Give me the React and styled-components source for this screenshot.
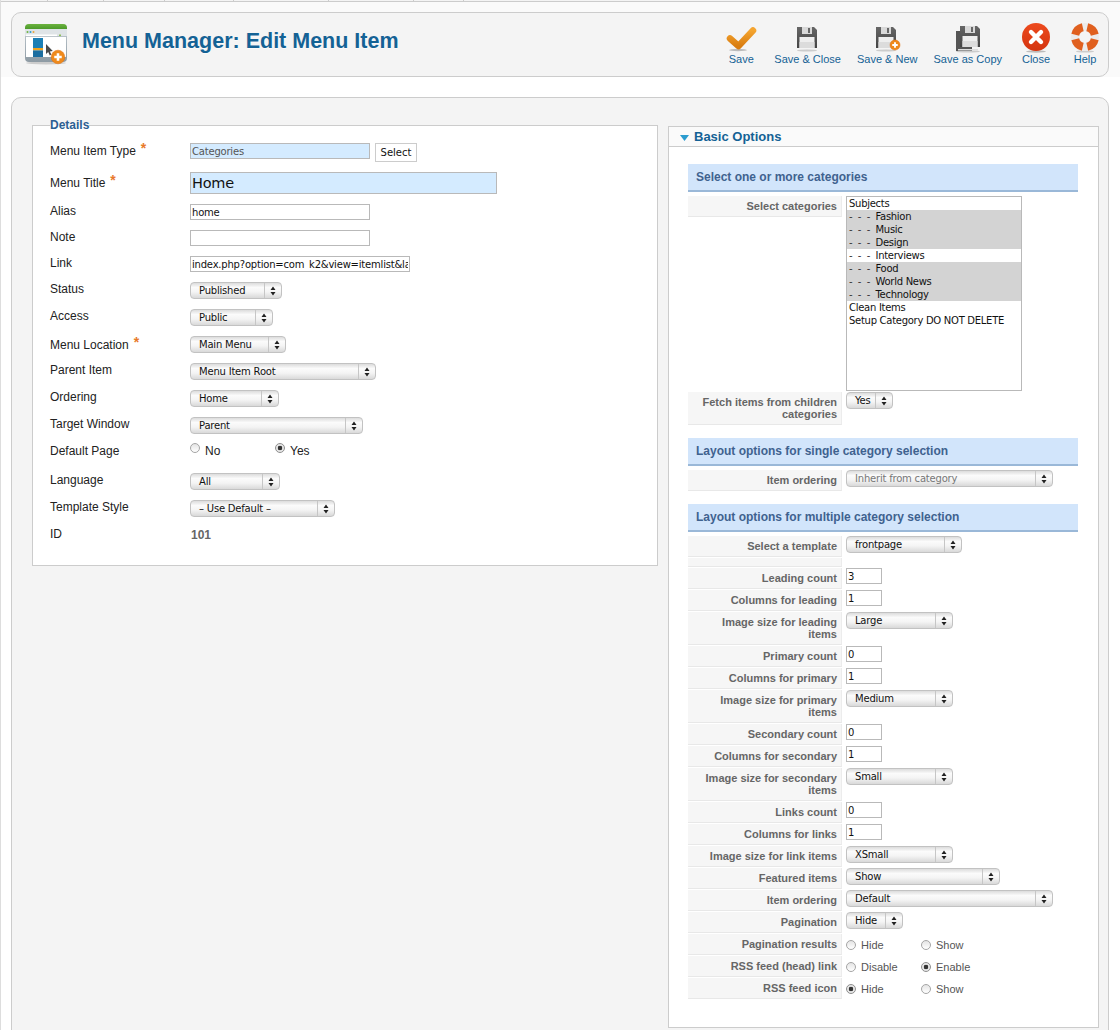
import React from "react";
import styled, { createGlobalStyle } from "styled-components";

const UI = `"DejaVu Sans", "Liberation Sans", sans-serif`;
const SANS = `"Liberation Sans", Arial, sans-serif`;

const Global = createGlobalStyle`
  html, body { margin: 0; padding: 0; height: 1030px; overflow: hidden; background: #fff; }
  #root { height: 1030px; overflow: hidden; }
  * { box-sizing: border-box; }
`;

const Page = styled.div`
  font-family: ${SANS};
  border-left: 1px solid #ddd;
  min-height: 1030px;
  height: 1030px;
  overflow: hidden;
`;
const TopMenu = styled.div`
  display: flex;
  height: 2px;
  border-bottom: 1px solid #ccc;
  background: #f4f4f4;
`;
const TopCell = styled.div`
  width: ${(p) => p.$w}px;
  border-right: 1px solid #ccc;
`;
const HeaderBand = styled.div`
  background: #fafafa;
  padding: 10px 11px 0 10px;
  height: 75px;
`;
const Toolbar = styled.header`
  display: flex;
  align-items: flex-start;
  height: 65px;
  border: 1px solid #ccc;
  border-radius: 10px;
  background: #f4f4f4;
  padding: 10px 6px 0 12px;
`;
const PageIcon = styled.svg`
  width: 46px;
  height: 44px;
  flex: none;
`;
const Title = styled.h1`
  margin: 4px 0 0 12px;
  font: bold 21.5px/28px ${SANS};
  color: #146295;
  text-shadow: 0 1px 0 rgba(255, 255, 255, 0.6);
`;
const Tools = styled.div`
  margin-left: auto;
  display: flex;
  gap: 16px;
`;
const ToolButton = styled.a`
  display: flex;
  flex-direction: column;
  align-items: center;
  min-width: 34px;
  color: #146295;
  font: 11px/13px ${SANS};
  white-space: nowrap;
  &:nth-child(5) {
    margin-left: 1px;
  }
  &:last-child {
    margin-left: -1px;
  }
`;
const ToolIcon = styled.svg`
  width: 34px;
  height: 30px;
  flex: none;
`;
const MainPanel = styled.main`
  margin: 20px 11px 0 10px;
  height: 1000px;
  border: 1px solid #ccc;
  border-radius: 10px 10px 0 0;
  background: #f4f4f4;
  padding: 20px 9px 0 20px;
  display: flex;
  align-items: flex-start;
  gap: 10px;
`;
const Details = styled.fieldset`
  width: 626px;
  flex: none;
  margin: 0;
  padding: 11px 17px 0;
  height: 448px;
  border: 1px solid #ccc;
  background: #fff;
  min-inline-size: 0;
`;
const Legend = styled.legend`
  padding: 0;
  font: bold 12px/14px ${SANS};
  color: #2c5f93;
`;
const FormRow = styled.div`
  display: flex;
  align-items: flex-start;
  height: ${(p) => p.$h}px;
`;
const FormLabel = styled.label`
  width: 140px;
  flex: none;
  padding-top: ${(p) => p.$nudge || 0}px;
  font: 12px/14px ${SANS};
  color: #222;
`;
const Star = styled.span`
  color: #e8792b;
  margin-left: 5px;
  font-size: 14px;
  font-weight: bold;
  line-height: 0;
  position: relative;
  top: -2px;
`;
const TextInput = styled.input`
  display: block;
  width: ${(p) => p.$w}px;
  height: ${(p) => p.$height || 16}px;
  padding: 0 1px;
  border: 1px solid #b9b9b9;
  border-radius: 0;
  outline: none;
  background: ${(p) => (p.$tint ? "#d4ebff" : "#fff")};
  color: ${(p) => p.$color || "#111"};
  font: ${(p) => p.$size || 10}px/1 ${UI};
  letter-spacing: -0.2px;
`;
const SmallButton = styled.button`
  margin-left: 5px;
  width: 42px;
  height: 19px;
  padding: 0;
  border: 1px solid #ccc;
  background: #fff;
  color: #111;
  font: 10px/1 ${UI};
`;
const PickerBox = styled.div`
  display: flex;
  width: ${(p) => p.$w}px;
  height: 17px;
  flex: none;
  border: 1px solid #c2c2c2;
  border-radius: 4px;
  background: linear-gradient(#dcdcdc, #fbfbfb 30%, #f4f4f4 60%, #d9d9d9);
  color: ${(p) => (p.$off ? "#777" : "#111")};
  font: 10px/15px ${UI};
  letter-spacing: -0.2px;
`;
const PickerValue = styled.span`
  flex: 1;
  min-width: 0;
  padding-left: 8px;
  white-space: nowrap;
  overflow: hidden;
`;
const PickerArrow = styled.span`
  width: 17px;
  flex: none;
  display: flex;
  align-items: center;
  justify-content: center;
  border-left: 1px solid #c6c6c6;
`;
const RadioSet = styled.div`
  display: flex;
  padding-top: ${(p) => p.$top || 0}px;
`;
const RadioOption = styled.label`
  display: flex;
  align-items: center;
  width: ${(p) => p.$w}px;
  gap: 5px;
  font: ${(p) => p.$size}px/14px ${SANS};
  color: ${(p) => p.$color};
`;
const RadioDot = styled.input.attrs({ type: "radio", readOnly: true })`
  appearance: none;
  width: 10px;
  height: 10px;
  margin: 0;
  flex: none;
  border-radius: 50%;
  border: 1px solid #a5a5a5;
  background: linear-gradient(#e4e4e4, #fff);
  position: relative;
  top: ${(p) => p.$lift || 0}px;
  &:checked {
    background: radial-gradient(circle, #333 0 2px, #e6e6e6 2.6px);
    border-color: #8f8f8f;
  }
`;
const IdText = styled.span`
  padding-left: 1px;
  font: bold 12px/16px ${SANS};
  color: #666;
`;
const OptionsPanel = styled.section`
  width: 431px;
  flex: none;
  height: 902px;
  margin-top: 8px;
  border: 1px solid #ccc;
  background: #fff;
`;
const PanelHead = styled.h3`
  display: flex;
  align-items: center;
  gap: 5px;
  margin: 0;
  height: 20px;
  padding-left: 11px;
  border-bottom: 1px solid #ccc;
  background: #fafafa;
  font: bold 13px/18px ${SANS};
  color: #146295;
`;
const PanelBody = styled.div`
  padding: 17px 19px 0;
`;
const SectionHead = styled.h4`
  margin: 0 0 4px;
  width: 390px;
  height: 28px;
  padding-left: 8px;
  border-bottom: 2px solid #9ab8d8;
  background: #d2e5fb;
  font: bold 12px/27px ${SANS};
  color: #3f628f;
`;
const Section = styled.div`
  margin-bottom: 13px;
`;
const OptionRow = styled.div`
  display: flex;
  align-items: flex-start;
  gap: 4px;
  margin-bottom: 1px;
`;
const OptionLabel = styled.div`
  width: 154px;
  flex: none;
  padding: 4px 4px 4px 8px;
  background: #f6f6f6;
  border-bottom: 1px solid #e8e8e8;
  border-right: 1px solid #ececec;
  text-align: right;
  font: bold 11px/12px ${SANS};
  color: #666;
`;
const Spacer = styled.div`
  width: 154px;
  height: 9px;
  margin-bottom: 1px;
  background: #f6f6f6;
  border-bottom: 1px solid #e8e8e8;
  border-right: 1px solid #ececec;
`;
const ListBox = styled.div`
  width: 176px;
  height: 195px;
  border: 1px solid #b9b9b9;
  background: #fff;
  font: 10px/13px ${UI};
  letter-spacing: -0.28px;
  color: #111;
`;
const ListOption = styled.div`
  height: 13px;
  padding-left: 2px;
  white-space: nowrap;
  background: ${(p) => (p.$on ? "#d3d3d3" : "transparent")};
`;
const Dashes = styled.span`
  word-spacing: 2.6px;
  white-space: pre;
  color: #333;
`;

const Arrows = () => (
  <svg width="6" height="10" viewBox="0 0 6 10">
    <path d="M3 0.5 5.5 4H.5zM3 9.5.5 6h5z" fill="#222" />
  </svg>
);
const Picker = ({ w, off, children }) => (
  <PickerBox $w={w} $off={off}>
    <PickerValue>{children}</PickerValue>
    <PickerArrow><Arrows /></PickerArrow>
  </PickerBox>
);

const Defs = ({ id, from, to }) => (
  <defs>
    <linearGradient id={id} x1="0" y1="0" x2="0" y2="1">
      <stop offset="0" stopColor={from} />
      <stop offset="1" stopColor={to} />
    </linearGradient>
  </defs>
);
const Plus = ({ cx, cy, r }) => (
  <g>
    <circle cx={cx} cy={cy} r={r} fill="#ef8a1c" stroke="#dc6f10" strokeWidth=".5" />
    <path d={`M${cx - r * 0.55} ${cy}h${r * 1.1}M${cx} ${cy - r * 0.55}v${r * 1.1}`} stroke="#fff" strokeWidth={r * 0.38} />
  </g>
);
const Floppy = ({ x = 6, y = 3, id }) => (
  <g>
    <path d={`M${x} ${y}h17l3 3v18h-20z`} fill={`url(#${id})`} />
    <rect x={x + 5} y={y} width="10" height="7" fill="#d8d8d8" />
    <rect x={x + 11} y={y + 1} width="2" height="5" fill="#666" />
    <rect x={x + 2.5} y={y + 10} width="15" height="11" fill="#eee" />
    <rect x={x + 2.5} y={y + 15} width="15" height="6" fill="#dcdcdc" />
  </g>
);

const CheckIcon = () => (
  <ToolIcon viewBox="0 -1 34 30">
    <Defs id="chk" from="#f4a42f" to="#d97d10" />
    <ellipse cx="14" cy="26" rx="9" ry="1.2" fill="#bbb" />
    <path d="M6 14.5 14.5 22 29 6.5" fill="none" stroke="url(#chk)" strokeWidth="6.5" strokeLinecap="round" strokeLinejoin="round" />
  </ToolIcon>
);
const SaveIcon = ({ id, plus }) => (
  <ToolIcon viewBox="0 -1 34 30">
    <Defs id={id} from="#666" to="#444" />
    <ellipse cx="16" cy="26.5" rx="10" ry="1" fill="#ccc" />
    <Floppy id={id} />
    {plus && <Plus cx={25} cy={21} r={5} />}
  </ToolIcon>
);
const CopyIcon = () => (
  <ToolIcon viewBox="0 -1 34 30">
    <Defs id="cpy" from="#666" to="#444" />
    <ellipse cx="17" cy="27.5" rx="12" ry="1" fill="#ccc" />
    <path d="M5 7h16v20h-16z" fill="#555" />
    <path d="M7 25h20v1.5h-20z" fill="#ddd" />
    <Floppy x={9} y={2} id="cpy" />
  </ToolIcon>
);
const CloseIcon = () => (
  <ToolIcon viewBox="0 -1 34 30">
    <Defs id="cls" from="#ed4a1d" to="#d4340f" />
    <ellipse cx="17" cy="27.5" rx="10" ry="1.2" fill="#bbb" />
    <circle cx="17" cy="13" r="14" fill="url(#cls)" />
    <path d="M12 8l10 10M22 8 12 18" stroke="#fff" strokeWidth="4.4" strokeLinecap="round" />
  </ToolIcon>
);
const HelpIcon = () => (
  <ToolIcon viewBox="0 -1 34 30">
    <ellipse cx="17" cy="27.5" rx="9" ry="1" fill="#ccc" />
    <circle cx="17" cy="13" r="10" fill="none" stroke="#ececec" strokeWidth="8" />
    <g fill="none" stroke="#e0601f" strokeWidth="8">
      {[45, 135, 225, 315].map((a) => (
        <path key={a} d="M11.7 4.52A10 10 0 0 1 22.3 4.52" transform={`rotate(${a} 17 13)`} />
      ))}
    </g>
  </ToolIcon>
);

const MenuGlyph = () => (
  <PageIcon viewBox="0 0 46 44">
    <Defs id="mgr" from="#6cb33f" to="#4c9a2a" />
    <Defs id="mfoot" from="#c9d2d8" to="#8d9aa3" />
    <ellipse cx="22" cy="40" rx="20" ry="1.5" fill="#ccc" />
    <rect x="1" y="1" width="42" height="38" rx="4" fill="url(#mfoot)" />
    <path d="M1 6V5a4 4 0 0 1 4-4h34a4 4 0 0 1 4 4v1z" fill="url(#mgr)" />
    <rect x="1" y="6" width="42" height="7" fill="#dfe4e7" />
    <circle cx="3.5" cy="9" r="1" fill="#6cb33f" />
    <circle cx="6.5" cy="9" r="1" fill="#2d9ed0" />
    <circle cx="9.5" cy="9" r="1" fill="#e8a53a" />
    <rect x="2" y="11.5" width="31" height="1.6" fill="#fff" />
    <rect x="35" y="11.5" width="2" height="1.6" fill="#8fbf5a" />
    <rect x="2" y="14" width="40" height="20" fill="#fff" />
    <rect x="9" y="15" width="10" height="10" fill="#1c7fb5" />
    <rect x="9" y="25" width="10" height="2.4" fill="#f0a41e" />
    <rect x="9" y="27.4" width="10" height="6.6" fill="#1c6ea0" />
    <path d="M22 21v10l2.2-2 1.6 3.4 1.6-.8-1.6-3.2 3-.3z" fill="#4a4a4a" />
    <Plus cx={34} cy={34} r={6.8} />
  </PageIcon>
);
const Caret = () => (
  <svg width="9" height="6" viewBox="0 0 9 6" style={{ marginTop: 3 }}>
    <path d="M0 0h9L4.5 6z" fill="#2b9ccf" />
  </svg>
);

const Radios = ({ items, checked, w, size, color, top, lift }) => (
  <RadioSet $top={top}>
    {items.map((t) => (
      <RadioOption key={t} $w={w} $size={size} $color={color}>
        <RadioDot name={items.join() + top + t} $lift={lift} defaultChecked={t === checked} />
        {t}
      </RadioOption>
    ))}
  </RadioSet>
);

const topCells = [47, 56, 61, 69, 95, 85, 50];
const tools = [
  ["Save", <CheckIcon />],
  ["Save & Close", <SaveIcon id="s1" />],
  ["Save & New", <SaveIcon id="s2" plus />],
  ["Save as Copy", <CopyIcon />],
  ["Close", <CloseIcon />],
  ["Help", <HelpIcon />],
];
const cats = [
  ["Subjects", 0, 0],
  ["Fashion", 1, 1],
  ["Music", 1, 1],
  ["Design", 1, 1],
  ["Interviews", 1, 0],
  ["Food", 1, 1],
  ["World News", 1, 1],
  ["Technology", 1, 1],
  ["Clean Items", 0, 0],
  ["Setup Category DO NOT DELETE", 0, 0],
];
const R = ({ label, children }) => (
  <OptionRow>
    <OptionLabel>{label}</OptionLabel>
    {children}
  </OptionRow>
);
const Num = ({ v }) => <TextInput $w={36} readOnly value={v} />;
const radioProps = { w: 75, size: 11, color: "#555", top: 4 };

export default function App() {
  return (
    <Page>
      <Global />
      <TopMenu>
        {topCells.map((w, i) => <TopCell key={i} $w={w} />)}
      </TopMenu>
      <HeaderBand>
        <Toolbar>
          <MenuGlyph />
          <Title>Menu Manager: Edit Menu Item</Title>
          <Tools>
            {tools.map(([t, icon]) => (
              <ToolButton key={t}>
                {icon}
                {t}
              </ToolButton>
            ))}
          </Tools>
        </Toolbar>
      </HeaderBand>
      <MainPanel>
        <Details>
          <Legend>Details</Legend>
          <FormRow $h={29}>
            <FormLabel $nudge={1}>Menu Item Type<Star>*</Star></FormLabel>
            <TextInput $w={180} $tint $color="#555" readOnly value="Categories" />
            <SmallButton>Select</SmallButton>
          </FormRow>
          <FormRow $h={32}>
            <FormLabel $nudge={4}>Menu Title<Star>*</Star></FormLabel>
            <TextInput $w={307} $height={22} $size={14.5} $tint readOnly value="Home" />
          </FormRow>
          <FormRow $h={26}>
            <FormLabel>Alias</FormLabel>
            <TextInput $w={180} readOnly value="home" />
          </FormRow>
          <FormRow $h={26}>
            <FormLabel>Note</FormLabel>
            <TextInput $w={180} readOnly value="" />
          </FormRow>
          <FormRow $h={26}>
            <FormLabel>Link</FormLabel>
            <TextInput $w={220} readOnly value="index.php?option=com_k2&view=itemlist&layout=category" />
          </FormRow>
          <FormRow $h={27}><FormLabel>Status</FormLabel><Picker w={92}>Published</Picker></FormRow>
          <FormRow $h={27}><FormLabel>Access</FormLabel><Picker w={83}>Public</Picker></FormRow>
          <FormRow $h={27}><FormLabel $nudge={2}>Menu Location<Star>*</Star></FormLabel><Picker w={96}>Main Menu</Picker></FormRow>
          <FormRow $h={27}><FormLabel>Parent Item</FormLabel><Picker w={186}>Menu Item Root</Picker></FormRow>
          <FormRow $h={27}><FormLabel>Ordering</FormLabel><Picker w={89}>Home</Picker></FormRow>
          <FormRow $h={27}><FormLabel>Target Window</FormLabel><Picker w={173}>Parent</Picker></FormRow>
          <FormRow $h={29}>
            <FormLabel>Default Page</FormLabel>
            <Radios items={["No", "Yes"]} checked="Yes" w={85} size={12} color="#222" lift={-3} />
          </FormRow>
          <FormRow $h={27}><FormLabel>Language</FormLabel><Picker w={90}>All</Picker></FormRow>
          <FormRow $h={27}><FormLabel>Template Style</FormLabel><Picker w={145}>– Use Default –</Picker></FormRow>
          <FormRow $h={16}><FormLabel>ID</FormLabel><IdText>101</IdText></FormRow>
        </Details>
        <OptionsPanel>
          <PanelHead><Caret />Basic Options</PanelHead>
          <PanelBody>
            <Section>
              <SectionHead>Select one or more categories</SectionHead>
              <R label="Select categories">
                <ListBox>
                  {cats.map(([t, d, on]) => (
                    <ListOption key={t} $on={on}>
                      {d ? <Dashes>- - - </Dashes> : null}{t}
                    </ListOption>
                  ))}
                </ListBox>
              </R>
              <R label="Fetch items from children categories"><Picker w={47}>Yes</Picker></R>
            </Section>
            <Section>
              <SectionHead>Layout options for single category selection</SectionHead>
              <R label="Item ordering"><Picker w={207} off>Inherit from category</Picker></R>
            </Section>
            <Section>
              <SectionHead>Layout options for multiple category selection</SectionHead>
              <R label="Select a template"><Picker w={116}>frontpage</Picker></R>
              <Spacer />
              <R label="Leading count"><Num v="3" /></R>
              <R label="Columns for leading"><Num v="1" /></R>
              <R label="Image size for leading items"><Picker w={107}>Large</Picker></R>
              <R label="Primary count"><Num v="0" /></R>
              <R label="Columns for primary"><Num v="1" /></R>
              <R label="Image size for primary items"><Picker w={107}>Medium</Picker></R>
              <R label="Secondary count"><Num v="0" /></R>
              <R label="Columns for secondary"><Num v="1" /></R>
              <R label="Image size for secondary items"><Picker w={107}>Small</Picker></R>
              <R label="Links count"><Num v="0" /></R>
              <R label="Columns for links"><Num v="1" /></R>
              <R label="Image size for link items"><Picker w={107}>XSmall</Picker></R>
              <R label="Featured items"><Picker w={154}>Show</Picker></R>
              <R label="Item ordering"><Picker w={207}>Default</Picker></R>
              <R label="Pagination"><Picker w={57}>Hide</Picker></R>
              <R label="Pagination results"><Radios items={["Hide", "Show"]} checked="Hide" {...radioProps} /></R>
              <R label="RSS feed (head) link"><Radios items={["Disable", "Enable"]} checked="Enable" {...radioProps} /></R>
              <R label="RSS feed icon"><Radios items={["Hide", "Show"]} checked="Hide" {...radioProps} /></R>
            </Section>
          </PanelBody>
        </OptionsPanel>
      </MainPanel>
    </Page>
  );
}
